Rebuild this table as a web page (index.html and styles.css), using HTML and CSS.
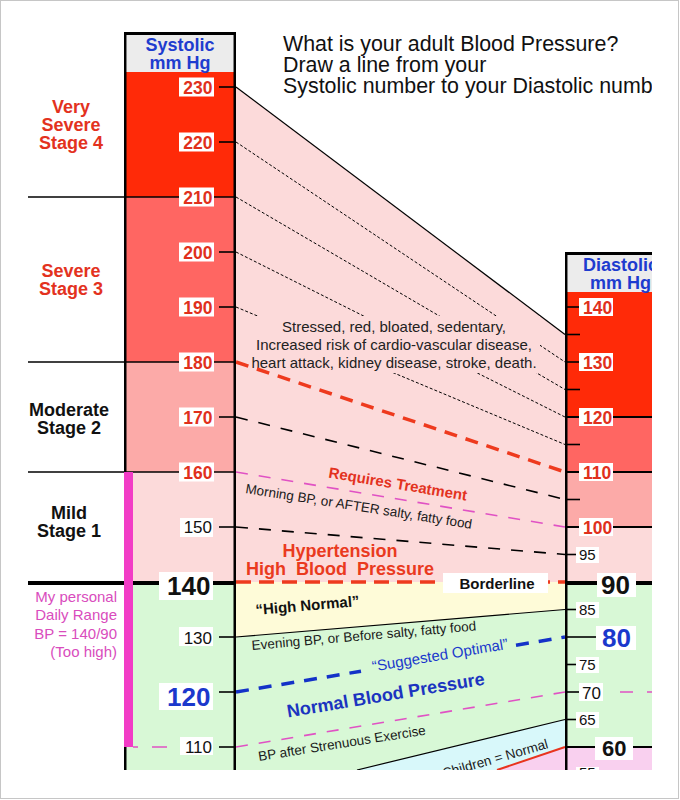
FILE: index.html
```html
<!DOCTYPE html>
<html lang="en">
<head>
<meta charset="utf-8">
<title>Blood Pressure Chart</title>
<link rel="stylesheet" href="styles.css">
</head>
<body>
<div class="frame">
<svg class="chart" width="677" height="797" viewBox="1 1 677 797" xmlns="http://www.w3.org/2000/svg">
  <defs>
    <clipPath id="clip"><rect x="0" y="0" width="652" height="770"/></clipPath>
  </defs>
  <g clip-path="url(#clip)">
    <!-- Title -->
    <text class="title"><tspan x="283" y="51">What is your adult Blood Pressure?</tspan><tspan x="283" dy="21">Draw a line from your</tspan><tspan x="283" dy="21">Systolic number to your Diastolic numb</tspan></text>

    <!-- Systolic column fills -->
    <rect class="f-red" x="126" y="72" width="108" height="125"/>
    <rect class="f-salmon" x="126" y="197" width="108" height="165"/>
    <rect class="f-lsalmon" x="126" y="362" width="108" height="110"/>
    <rect class="f-pink" x="126" y="472" width="108" height="110"/>
    <rect class="f-green" x="126" y="582" width="108" height="188"/>
    <rect class="f-head" x="127" y="35" width="106" height="37"/>

    <!-- Diastolic column fills -->
    <rect class="f-red" x="567" y="292" width="85" height="125"/>
    <rect class="f-salmon" x="567" y="417" width="85" height="55"/>
    <rect class="f-lsalmon" x="567" y="472" width="85" height="55"/>
    <rect class="f-pink" x="567" y="527" width="85" height="55"/>
    <rect class="f-green" x="567" y="582" width="85" height="165"/>
    <rect class="f-mag" x="567" y="747" width="85" height="23"/>
    <rect class="f-head" x="568" y="255" width="84" height="37"/>

    <!-- Middle region fills -->
    <polygon class="f-pink" points="236,87 565,334.5 565,582 236,582"/>
    <polygon class="f-yellow" points="236,582 565,582 565,609.5 236,637"/>
    <polygon class="f-green" points="236,637 565,609.5 565,719.5 357,770 236,770"/>
    <polygon class="f-cyan" points="357,770 565,719.5 565,747 497,770"/>
    <polygon class="f-mag" points="497,770 565,747 565,770"/>

    <!-- Upper connecting lines -->
    <line class="ln-thin" x1="236" y1="87" x2="565" y2="334.5"/>
    <line class="ln-fine" x1="236" y1="142" x2="565" y2="362"/>
    <line class="ln-fine" x1="236" y1="197" x2="565" y2="389.5"/>
    <line class="ln-fine" x1="236" y1="252" x2="565" y2="417"/>
    <line class="ln-fine" x1="236" y1="307" x2="565" y2="444.5"/>
    <rect class="f-pink" x="252" y="316" width="288" height="57"/>
    <text class="mid" text-anchor="middle"><tspan x="394" y="331.5">Stressed, red, bloated, sedentary,</tspan><tspan x="394" dy="18.5">Increased risk of cardio-vascular disease,</tspan><tspan x="394" dy="18">heart attack, kidney disease, stroke, death.</tspan></text>

    <!-- Treatment lines -->
    <line class="ln-red" x1="236" y1="362" x2="565" y2="472"/>
    <line class="ln-dash" x1="236" y1="417" x2="565" y2="499.5"/>
    <line class="ln-mag" x1="236" y1="472" x2="565" y2="527"/>
    <line class="ln-dash" x1="236" y1="527" x2="565" y2="554.5"/>
    <line class="ln-red-h" x1="236" y1="582" x2="565" y2="582"/>
    <rect class="f-white" x="443" y="573" width="105" height="20"/>
    <text class="border-lbl" x="497" y="588.5" text-anchor="middle">Borderline</text>

    <text class="req" x="328" y="477.5" transform="rotate(9.5 328 477.5)">Requires Treatment</text>
    <text class="note" x="245" y="493" transform="rotate(9 245 493)">Morning BP, or AFTER salty, fatty food</text>
    <text class="hyp pre" text-anchor="middle"><tspan x="340" y="557">Hypertension</tspan><tspan x="340" dy="18">High  Blood  Pressure</tspan></text>

    <!-- Normal region lines -->
    <line class="ln-thin" x1="236" y1="637" x2="565" y2="609.5"/>
    <text class="hn" x="256" y="615" transform="rotate(-5 256 615)">“High Normal”</text>
    <text class="note" x="252" y="650" transform="rotate(-5 252 650)">Evening BP, or Before salty, fatty food</text>

    <line class="ln-blue" x1="236" y1="692" x2="361" y2="671.2"/>
    <line class="ln-blue" x1="516" y1="645.2" x2="565" y2="637"/>
    <text class="opt" x="373" y="671.5" transform="rotate(-9.5 373 671.5)">“Suggested Optimal”</text>
    <text class="nbp" x="288" y="717.5" transform="rotate(-9.5 288 717.5)">Normal Blood Pressure</text>

    <line class="ln-mag" x1="236" y1="747" x2="565" y2="692"/>
    <text class="note" x="259" y="761" transform="rotate(-9 259 761)">BP after Strenuous Exercise</text>

    <line class="ln-thin" x1="357" y1="770" x2="565" y2="719.5"/>
    <line class="ln-redsolid" x1="497" y1="770" x2="565" y2="747"/>
    <text class="note" x="444" y="778" transform="rotate(-16 444 778)">Children = Normal</text>

    <!-- Left category lines -->
    <line class="ln" x1="28" y1="197" x2="234" y2="197"/>
    <line class="ln" x1="28" y1="362" x2="234" y2="362"/>
    <line class="ln" x1="28" y1="472" x2="234" y2="472"/>
    <line class="ln-thick" x1="28" y1="583" x2="235" y2="583"/>

    <!-- Left ticks -->
    <line class="ln" x1="219" y1="87" x2="234" y2="87"/>
    <line class="ln" x1="219" y1="142" x2="234" y2="142"/>
    <line class="ln" x1="219" y1="252" x2="234" y2="252"/>
    <line class="ln" x1="219" y1="307" x2="234" y2="307"/>
    <line class="ln" x1="219" y1="417" x2="234" y2="417"/>
    <line class="ln" x1="219" y1="527" x2="234" y2="527"/>
    <line class="ln" x1="219" y1="637" x2="234" y2="637"/>
    <line class="ln" x1="219" y1="692" x2="234" y2="692"/>
    <line class="ln" x1="219" y1="747" x2="234" y2="747"/>

    <!-- Right lines and ticks -->
    <line class="ln" x1="565" y1="307" x2="580" y2="307"/>
    <line class="ln" x1="565" y1="334.5" x2="580" y2="334.5"/>
    <line class="ln" x1="565" y1="362" x2="580" y2="362"/>
    <line class="ln" x1="565" y1="389.5" x2="580" y2="389.5"/>
    <line class="ln-mid" x1="565" y1="417" x2="652" y2="417"/>
    <line class="ln" x1="565" y1="444.5" x2="580" y2="444.5"/>
    <line class="ln-mid" x1="565" y1="472" x2="652" y2="472"/>
    <line class="ln" x1="565" y1="499.5" x2="580" y2="499.5"/>
    <line class="ln-mid" x1="565" y1="527" x2="652" y2="527"/>
    <line class="ln" x1="565" y1="554.5" x2="577" y2="554.5"/>
    <line class="ln-thick" x1="565" y1="583" x2="652" y2="583"/>
    <line class="ln" x1="565" y1="609.5" x2="577" y2="609.5"/>
    <line class="ln" x1="565" y1="637" x2="597" y2="637"/>
    <line class="ln" x1="565" y1="664.5" x2="577" y2="664.5"/>
    <line class="ln" x1="565" y1="692" x2="580" y2="692"/>
    <line class="ln-mag-r" x1="620" y1="692" x2="652" y2="692"/>
    <line class="ln" x1="565" y1="719.5" x2="577" y2="719.5"/>
    <line class="ln-mid" x1="565" y1="747" x2="652" y2="747"/>
    <line class="ln" x1="565" y1="774.5" x2="577" y2="774.5"/>

    <!-- Column borders -->
    <rect class="f-black" x="124" y="32" width="112" height="3"/>
    <rect class="f-black" x="124" y="32" width="2.5" height="738"/>
    <rect class="f-black" x="233.5" y="32" width="2.5" height="738"/>
    <rect class="f-black" x="565" y="252" width="87" height="3"/>
    <rect class="f-black" x="565" y="252" width="2.5" height="518"/>

    <!-- Personal range bar -->
    <rect class="f-bar" x="124" y="472" width="9" height="275"/>
    <line class="ln-mag-l" x1="133" y1="747" x2="170" y2="747"/>

    <!-- Headers -->
    <text class="head" text-anchor="middle"><tspan x="180" y="51">Systolic</tspan><tspan x="180" dy="17.5">mm Hg</tspan></text>
    <text class="head"><tspan x="583" y="271">Diastolic</tspan><tspan x="590" dy="18">mm Hg</tspan></text>

    <!-- Stage labels -->
    <text class="stage c-red" text-anchor="middle"><tspan x="71" y="113">Very</tspan><tspan x="71" dy="18">Severe</tspan><tspan x="71" dy="18">Stage 4</tspan></text>
    <text class="stage c-red" text-anchor="middle"><tspan x="71" y="277">Severe</tspan><tspan x="71" dy="18">Stage 3</tspan></text>
    <text class="stage c-black" text-anchor="middle"><tspan x="69" y="415.5">Moderate</tspan><tspan x="69" dy="18">Stage 2</tspan></text>
    <text class="stage c-black" text-anchor="middle"><tspan x="69" y="518.5">Mild</tspan><tspan x="69" dy="18">Stage 1</tspan></text>

    <text class="personal" text-anchor="end"><tspan x="117" y="601.5">My personal</tspan><tspan x="117" dy="18.5">Daily Range</tspan><tspan x="117" dy="18.5">BP = 140/90</tspan><tspan x="117" dy="18.5">(Too high)</tspan></text>

    <!-- Systolic value labels -->
    <rect class="f-white" x="179" y="77.5" width="35" height="19"/>
    <text class="lbl-r" x="212.5" y="93.5" text-anchor="end">230</text>
    <rect class="f-white" x="179" y="132.5" width="35" height="19"/>
    <text class="lbl-r" x="212.5" y="148.5" text-anchor="end">220</text>
    <rect class="f-white" x="179" y="187.5" width="35" height="19"/>
    <text class="lbl-r" x="212.5" y="203.5" text-anchor="end">210</text>
    <rect class="f-white" x="179" y="242.5" width="35" height="19"/>
    <text class="lbl-r" x="212.5" y="258.5" text-anchor="end">200</text>
    <rect class="f-white" x="179" y="297.5" width="35" height="19"/>
    <text class="lbl-r" x="212.5" y="313.5" text-anchor="end">190</text>
    <rect class="f-white" x="179" y="352.5" width="35" height="19"/>
    <text class="lbl-r" x="212.5" y="368.5" text-anchor="end">180</text>
    <rect class="f-white" x="179" y="407.5" width="35" height="19"/>
    <text class="lbl-r" x="212.5" y="423.5" text-anchor="end">170</text>
    <rect class="f-white" x="179" y="462.5" width="35" height="19"/>
    <text class="lbl-r" x="212.5" y="478.5" text-anchor="end">160</text>
    <rect class="f-white" x="180" y="518" width="33" height="19"/>
    <text class="lbl-n" x="212" y="533.3" text-anchor="end">150</text>
    <rect class="f-white" x="159" y="572" width="54" height="28"/>
    <text class="lbl-big" x="210.5" y="595" text-anchor="end">140</text>
    <rect class="f-white" x="179" y="627" width="34" height="19"/>
    <text class="lbl-n" x="212" y="643.5" text-anchor="end">130</text>
    <rect class="f-white" x="159" y="683" width="54" height="27"/>
    <text class="lbl-big c-blue" x="210.5" y="705.5" text-anchor="end">120</text>
    <rect class="f-white" x="180" y="737" width="33" height="18"/>
    <text class="lbl-n" x="212" y="752.5" text-anchor="end">110</text>

    <!-- Diastolic value labels -->
    <rect class="f-white" x="579" y="298" width="34" height="18"/>
    <text class="lbl-r" x="583" y="313.5">140</text>
    <rect class="f-white" x="579" y="353" width="34" height="18"/>
    <text class="lbl-r" x="583" y="368.5">130</text>
    <rect class="f-white" x="579" y="408" width="34" height="18"/>
    <text class="lbl-r" x="583" y="423.5">120</text>
    <rect class="f-white" x="579" y="463" width="34" height="18"/>
    <text class="lbl-r" x="583" y="478.5">110</text>
    <rect class="f-white" x="579" y="518" width="34" height="18"/>
    <text class="lbl-r" x="583" y="533.5">100</text>
    <rect class="f-white" x="576" y="547" width="23" height="16"/>
    <text class="lbl-s" x="579" y="559.5">95</text>
    <rect class="f-white" x="597" y="573" width="39" height="24"/>
    <text class="lbl-big" x="601" y="594">90</text>
    <rect class="f-white" x="576" y="602" width="23" height="16"/>
    <text class="lbl-s" x="579" y="614.5">85</text>
    <rect class="f-white" x="596" y="626" width="40" height="24"/>
    <text class="lbl-big c-blue" x="602" y="647">80</text>
    <rect class="f-white" x="576" y="657" width="23" height="16"/>
    <text class="lbl-s" x="579" y="670">75</text>
    <rect class="f-white" x="579" y="683" width="24" height="18"/>
    <text class="lbl-n" x="582" y="699">70</text>
    <rect class="f-white" x="576" y="712" width="23" height="16"/>
    <text class="lbl-s" x="579" y="724.5">65</text>
    <rect class="f-white" x="595" y="737" width="38" height="23"/>
    <text class="lbl-60" x="602" y="756">60</text>
    <rect class="f-white" x="576" y="767" width="23" height="16"/>
    <text class="lbl-s" x="579" y="778">55</text>
  </g>
</svg>
</div>
</body>
</html>
```

FILE: styles.css
```css
html, body {
  margin: 0;
  padding: 0;
  background: #ffffff;
}

.frame {
  width: 679px;
  height: 799px;
  box-sizing: border-box;
  border: 1px solid #c6c6c6;
  background: #ffffff;
}

.chart {
  display: block;
}

.chart text {
  font-family: "Liberation Sans", Arial, Helvetica, sans-serif;
}

.pre { white-space: pre; }

.c-red { fill: #e3321e; }
.c-blue { fill: #1b38cc; }
.c-black { fill: #111111; }

.title { font-size: 21.4px; fill: #111111; }
.head { font-size: 18px; font-weight: bold; fill: #1e3ccf; }
.stage { font-size: 18px; font-weight: bold; }
.personal { font-size: 15px; fill: #d94cbd; }

.lbl-r { font-size: 17.5px; font-weight: bold; fill: #e0301c; }
.lbl-n { font-size: 17px; fill: #111111; }
.lbl-s { font-size: 15px; fill: #111111; }
.lbl-big { font-size: 26px; font-weight: bold; fill: #111111; }
.lbl-big.c-blue { fill: #1b38cc; }
.lbl-60 { font-size: 22px; font-weight: bold; fill: #111111; }

.mid { font-size: 15px; fill: #222222; }
.note { font-size: 13.5px; fill: #1a1a1a; }
.req { font-size: 15px; font-weight: bold; fill: #e3321e; }
.hyp { font-size: 18px; font-weight: bold; fill: #ea3a1e; }
.border-lbl { font-size: 15px; font-weight: bold; fill: #111111; }
.hn { font-size: 15px; font-weight: bold; fill: #111111; }
.opt { font-size: 15px; fill: #1b38cc; }
.nbp { font-size: 18px; font-weight: bold; fill: #1b34c0; }

.f-red { fill: #ff2a08; }
.f-salmon { fill: #ff6662; }
.f-lsalmon { fill: #fcaaa8; }
.f-pink { fill: #fcdada; }
.f-green { fill: #d8f8d6; }
.f-yellow { fill: #fefbd8; }
.f-cyan { fill: #d8f8fa; }
.f-mag { fill: #f9d0ef; }
.f-head { fill: #ececec; }
.f-white { fill: #ffffff; }
.f-black { fill: #000000; }
.f-bar { fill: #f23cc6; }

.ln { stroke: #000000; stroke-width: 1.6; }
.ln-mid { stroke: #000000; stroke-width: 2.2; }
.ln-thick { stroke: #000000; stroke-width: 3.8; }
.ln-thin { stroke: #000000; stroke-width: 1.2; }
.ln-fine { stroke: #000000; stroke-width: 1; stroke-dasharray: 3 2; }
.ln-dash { stroke: #000000; stroke-width: 1.6; stroke-dasharray: 12 11; }
.ln-red { stroke: #ee3a1e; stroke-width: 3.5; stroke-dasharray: 13 9; }
.ln-red-h { stroke: #ee3a1e; stroke-width: 3.5; stroke-dasharray: 15 8; }
.ln-blue { stroke: #1432c8; stroke-width: 3.5; stroke-dasharray: 13 10; }
.ln-mag { stroke: #e052c4; stroke-width: 1.6; stroke-dasharray: 12 11; }
.ln-mag-r { stroke: #e052c4; stroke-width: 1.6; stroke-dasharray: 13 14; }
.ln-mag-l { stroke: #e052c4; stroke-width: 1.6; stroke-dasharray: 5 14 15 60; }
.ln-redsolid { stroke: #e8341e; stroke-width: 2; }
```
